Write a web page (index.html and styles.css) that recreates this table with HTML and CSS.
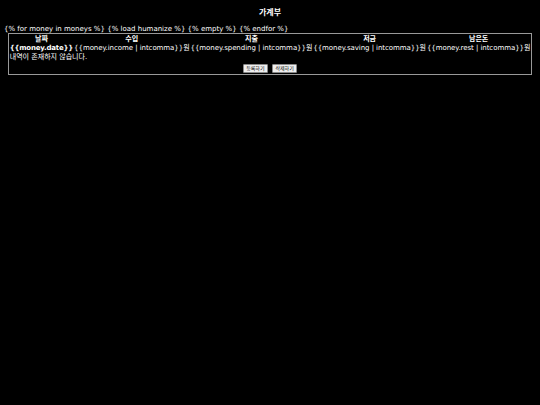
FILE: index.html
```html
<!DOCTYPE html>
<html lang="ko">
<head>
<meta charset="utf-8">
<title>가계부</title>
<link rel="stylesheet" href="styles.css">
</head>
<body>
<h1 class="title">가계부</h1>
<div class="tags">{% for money in moneys %} {% load humanize %} {% empty %} {% endfor %}</div>
<table class="book">
  <thead>
    <tr>
      <th>날짜</th>
      <th>수입</th>
      <th>지출</th>
      <th>저금</th>
      <th>남은돈</th>
    </tr>
  </thead>
  <tbody>
    <tr class="row">
      <th class="date">{{money.date}}</th>
      <td>{{money.income | intcomma}}원</td>
      <td>{{money.spending | intcomma}}원</td>
      <td>{{money.saving | intcomma}}원</td>
      <td>{{money.rest | intcomma}}원</td>
    </tr>
    <tr>
      <td colspan="5">내역이 존재하지 않습니다.</td>
    </tr>
    <tr>
      <td colspan="5" class="actions">
        <button class="btn" type="button">등록하기</button>
        <button class="btn" type="button">삭제하기</button>
      </td>
    </tr>
  </tbody>
</table>
</body>
</html>
```
FILE: styles.css
```css
html, body {
  background: #000;
}
body {
  margin: 0;
  padding: 4px 4px;
  color: #fff;
  font-family: "DejaVu Sans", "Noto Sans CJK KR", sans-serif;
  font-size: 7px;
}
.title {
  margin: 4px 0 7px;
  font-size: 8px;
  line-height: 10px;
  font-weight: bold;
  text-align: center;
}
.tags {
  line-height: 8px;
}
.book {
  margin: 0 auto;
  border: 1px solid #999;
  border-spacing: 1px;
  color: #fff;
  font-size: 7px;
}
.book th, .book td {
  padding: 0;
  white-space: nowrap;
  line-height: 8px;
}
.book th {
  text-align: center;
  font-weight: bold;
}
.book td {
  text-align: left;
}
.row td {
  letter-spacing: -0.06px;
}
.book .date {
  text-align: left;
  letter-spacing: -0.2px;
}
.book .actions {
  text-align: center;
  padding-top: 2px;
}
.btn {
  font-family: "DejaVu Sans", "Noto Sans CJK KR", sans-serif;
  font-size: 5px;
  line-height: 7px;
  padding: 0 2px;
  width: 25px;
  background: #eee;
  color: #000;
  border: 1px solid #888;
  border-radius: 1px;
  margin: 0 1px;
  vertical-align: top;
}
```
